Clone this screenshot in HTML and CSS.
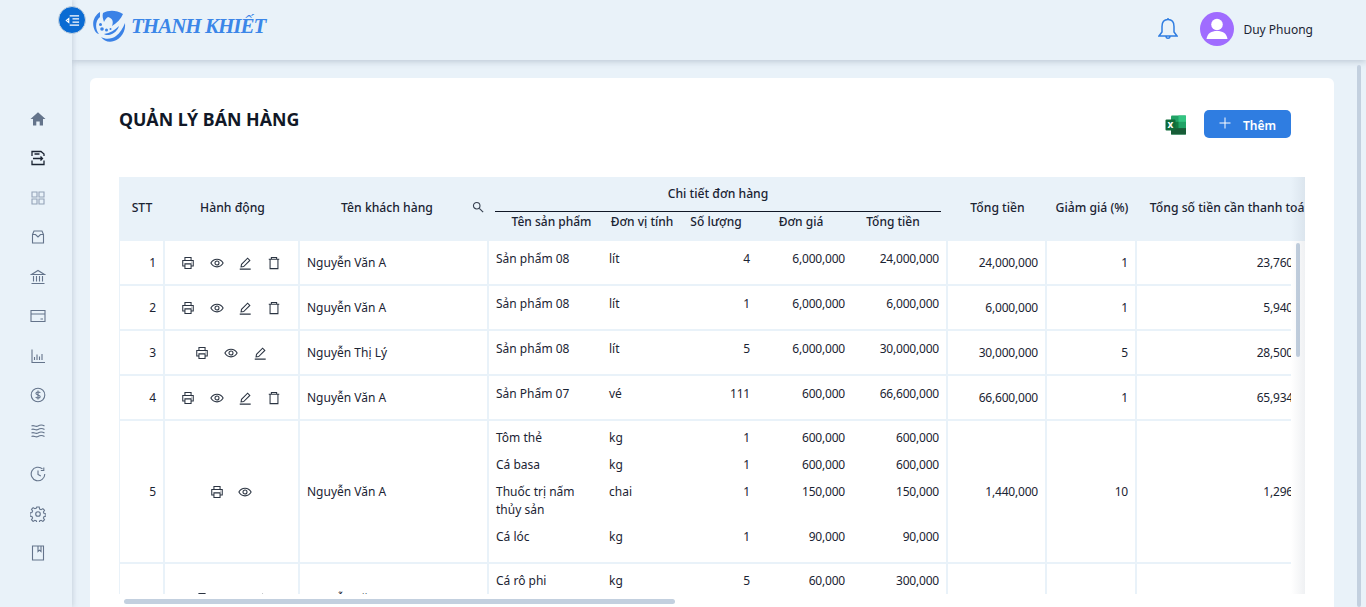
FILE: index.html
```html
<!DOCTYPE html>
<html lang="vi">
<head>
  <meta charset="UTF-8" />
  <meta name="viewport" content="width=device-width, initial-scale=1.0"/>
  <title>Quản lý bán hàng</title>
  <link rel="stylesheet" href="styles.css">
</head>
<body>
  <svg class="sprite" width="0" height="0">
    <symbol id="i-print" viewBox="0 0 16 16">
      <path d="M4.500 5V1.800h7V5M4.500 11.500H2V5.200h12v6.300h-2.500M4.500 9h7v5.200h-7z"/>
      <path d="M11.800 7h.4"/>
    </symbol>
    <symbol id="i-eye" viewBox="0 0 16 16">
      <path d="M1 8c1.600-3 4-4.400 7-4.400s5.400 1.400 7 4.400c-1.600 3-4 4.400-7 4.400S2.600 11 1 8z"/>
      <circle cx="8" cy="8" r="2.300"/>
    </symbol>
    <symbol id="i-edit" viewBox="0 0 16 16">
      <path d="M2 15h12.500M3.500 12.500l.5-3 7-7 2.500 2.500-7 7z"/>
    </symbol>
    <symbol id="i-trash" viewBox="0 0 16 16">
      <path d="M2 3.800h12M5 3.800V1.600h6v2.200M3.500 3.800v10.600h9V3.800"/>
    </symbol>
  </svg>

  <div class="app">
    <aside class="sidebar">
      <nav class="side-nav">
        <a class="side-item"><svg viewBox="0 0 16 16"><path class="solid" d="M8 1.200 15.500 8H13v6.500H9.700v-4H6.300v4H3V8H.5z"/></svg></a>
        <a class="side-item is-active"><svg viewBox="0 0 16 16"><path d="M2 6V1.500h9L14 4v2M2 10.500v4h12v-4M4.500 4h5M3 8.500h9.500M10.500 6.500l2 2-2 2"/></svg></a>
        <a class="side-item is-light"><svg viewBox="0 0 16 16"><path d="M2 2h5v5H2zM9 2h5v5H9zM2 9h5v5H2zM9 9h5v5H9z"/></svg></a>
        <a class="side-item"><svg viewBox="0 0 16 16"><path d="M2.500 5.500 4 2h8l1.500 3.500v8.500h-11zM2.500 5.500H5.500L8 8l2.500-2.500h3"/></svg></a>
        <a class="side-item"><svg viewBox="0 0 16 16"><path d="M1.500 5.500 8 1.500l6.500 4zM3.500 7v5.500M6.500 7v5.500M9.500 7v5.500M12.500 7v5.500M1.500 14.500h13"/></svg></a>
        <a class="side-item"><svg viewBox="0 0 16 16"><path d="M1 2.500h14v11H1zM1 6h14M10.500 11h2.500"/></svg></a>
        <a class="side-item"><svg viewBox="0 0 16 16"><path d="M2 1.500v13h13M4.500 12V9M7 12V6.500M9.500 12V8.500M12 12V6"/></svg></a>
        <a class="side-item"><svg viewBox="0 0 16 16"><circle cx="8" cy="8" r="6.800"/><path d="M10.300 5.800C9.800 4.800 6 4.500 5.900 6.400 5.800 8.400 10.300 7.500 10.200 9.600 10.100 11.500 6.300 11.300 5.700 10M8 3.500v9"/></svg></a>
        <a class="side-item side-item-tight"><svg viewBox="0 0 16 16"><path d="M1.500 3C4 1.500 5.500 4.500 8 3s4-1.500 6.500 0M1.500 6.500C4 5 5.500 8 8 6.500s4-1.500 6.500 0M1.500 10C4 8.500 5.500 11.500 8 10s4-1.500 6.500 0M1.500 13.500C4 12 5.500 15 8 13.500s4-1.500 6.500 0"/></svg></a>
        <a class="side-item side-item-gap"><svg viewBox="0 0 16 16"><path d="M14.800 8A6.800 6.800 0 1 1 12.500 2.900M8 4.500V8.500l2.800 1.500M13.800 1.500v3h-3"/></svg></a>
        <a class="side-item"><svg viewBox="0 0 16 16"><circle cx="8" cy="8" r="2.300"/><path d="M6.800 1h2.400l.4 2 1.500.7 1.800-1.100 1.600 1.700-1.100 1.700.7 1.500 1.900.4v2.200l-1.900.4-.7 1.500 1.100 1.700-1.600 1.700-1.800-1.100-1.500.7-.4 2H6.800l-.4-2-1.500-.7-1.800 1.100-1.600-1.700 1.100-1.700-.7-1.500-1.900-.4V6.900l1.900-.4.7-1.500-1.100-1.700 1.600-1.700 1.800 1.100 1.500-.7z"/></svg></a>
        <a class="side-item"><svg viewBox="0 0 16 16"><path d="M2.500 1h11v14h-11zM8 1v5.500l1.500-1.300L11 6.500V1"/></svg></a>
      </nav>
    </aside>

    <button class="menu-toggle">
      <svg viewBox="0 0 16 16" width="15" height="15"><path d="M5 3h10M8 6.300h7M8 9.700h7M5 13h10M1.500 8 4 6v4z"/></svg>
    </button>

    <div class="main">
      <header class="topbar">
        <div class="logo">
          <svg class="logo-mark" viewBox="0 0 34 34" width="34" height="34">
            <path class="logo-fill" d="M11 4C17 1 24 1 31 5 29 10 25 14 20 17 22 12 20 9 16 8 14 9 13 11 12 13 11 10 10 7 11 4z"/>
            <path class="logo-fill" d="M8 3C2 7-1 14 3 22 4 24 6 25 7 25 3 20 3 12 8 8z"/>
            <path class="logo-fill" d="M33 14C34 22 29 30 22 32 17 34 12 32 9 28 14 31 20 30 24 27 28 24 31 19 33 14z"/>
            <path class="logo-fill" d="M27 17C26 21 22 25 17 26 15 26 13 26 12 25 18 24 23 21 27 17z"/>
            <circle class="logo-fill" cx="8.500" cy="15.500" r="1.500"/>
            <circle class="logo-fill" cx="10" cy="20" r="1.800"/>
            <circle class="logo-fill" cx="14.500" cy="21" r="1.500"/>
            <circle class="logo-fill" cx="18.500" cy="20" r="1"/>
          </svg>
          <span class="logo-text">THANH KHIẾT</span>
        </div>
        <div class="topbar-right">
          <svg class="bell" viewBox="0 0 20 24" width="20" height="24"><path d="M10 2.500c-4 0-6 3-6 7v5.500l-3 4h18l-3-4V9.500c0-4-2-7-6-7zM10 1v1.500M8 19c0 3 4 3 4 0"/></svg>
          <div class="avatar">
            <svg viewBox="0 0 34 34" width="34" height="34"><circle cx="17" cy="12.500" r="5.800"/><path d="M6.500 27c1-6 5-8 10.500-8s9.500 2 10.500 8z"/></svg>
          </div>
          <span class="user-name">Duy Phuong</span>
        </div>
      </header>

      <main class="content">
        <section class="card">
          <div class="card-head">
            <h1 class="page-title">QUẢN LÝ BÁN HÀNG</h1>
            <div class="card-actions">
              <svg class="excel" viewBox="0 0 22 20" width="22" height="20">
                <rect x="6" y="0.500" width="15" height="19" rx="1" fill="#21a366"/>
                <rect x="13.500" y="0.500" width="7.500" height="6.300" fill="#33c481"/>
                <rect x="6" y="6.800" width="7.500" height="6.300" fill="#107c41"/>
                <rect x="6" y="13.100" width="15" height="6.400" fill="#185c37"/>
                <rect x="0.500" y="4.500" width="10" height="11" rx="1" fill="#0f6b3a"/>
                <text class="excel-x" x="5.500" y="13">x</text>
              </svg>
              <button class="btn-add">
                <svg viewBox="0 0 12 12" width="12" height="12"><path d="M6 .5v11M.5 6h11"/></svg>
                <span>Thêm</span>
              </button>
            </div>
          </div>

          <div class="table-wrap">
            <div class="table-head">
              <table class="grid-table">
                <colgroup>
                  <col class="c-stt"><col class="c-act"><col class="c-name"><col class="c-detail"><col class="c-total"><col class="c-disc"><col class="c-pay">
                </colgroup>
                <thead>
                  <tr>
                    <th>STT</th>
                    <th>Hành động</th>
                    <th>
                      <div class="th-search">
                        <span>Tên khách hàng</span>
                        <svg viewBox="0 0 14 14" width="12" height="12"><circle cx="5.500" cy="5.500" r="3.800"/><path d="M8.500 8.500l4.500 4.500"/></svg>
                      </div>
                    </th>
                    <th class="th-detail">
                      <div class="detail-title">Chi tiết đơn hàng</div>
                      <div class="detail-cols">
                        <span>Tên sản phẩm</span>
                        <span>Đơn vị tính</span>
                        <span>Số lượng</span>
                        <span>Đơn giá</span>
                        <span>Tổng tiền</span>
                      </div>
                    </th>
                    <th>Tổng tiền</th>
                    <th>Giảm giá (%)</th>
                    <th>Tổng số tiền cần thanh toán</th>
                  </tr>
                </thead>
              </table>
            </div>

            <div class="table-body">
              <table class="grid-table">
                <colgroup>
                  <col class="c-stt"><col class="c-act"><col class="c-name"><col class="c-detail"><col class="c-total"><col class="c-disc"><col class="c-pay">
                </colgroup>
                <tbody>
                  <tr>
                    <td class="num">1</td>
                    <td><div class="actions">
                      <svg class="ico"><use href="#i-print"/></svg><svg class="ico"><use href="#i-eye"/></svg><svg class="ico"><use href="#i-edit"/></svg><svg class="ico"><use href="#i-trash"/></svg>
                    </div></td>
                    <td>Nguyễn Văn A</td>
                    <td class="detail">
                      <div class="line"><span>Sản phẩm 08</span><span>lít</span><span class="r">4</span><span class="r">6,000,000</span><span class="r">24,000,000</span></div>
                    </td>
                    <td class="num">24,000,000</td>
                    <td class="num">1</td>
                    <td class="num">23,760,000</td>
                  </tr>
                  <tr>
                    <td class="num">2</td>
                    <td><div class="actions">
                      <svg class="ico"><use href="#i-print"/></svg><svg class="ico"><use href="#i-eye"/></svg><svg class="ico"><use href="#i-edit"/></svg><svg class="ico"><use href="#i-trash"/></svg>
                    </div></td>
                    <td>Nguyễn Văn A</td>
                    <td class="detail">
                      <div class="line"><span>Sản phẩm 08</span><span>lít</span><span class="r">1</span><span class="r">6,000,000</span><span class="r">6,000,000</span></div>
                    </td>
                    <td class="num">6,000,000</td>
                    <td class="num">1</td>
                    <td class="num">5,940,000</td>
                  </tr>
                  <tr>
                    <td class="num">3</td>
                    <td><div class="actions">
                      <svg class="ico"><use href="#i-print"/></svg><svg class="ico"><use href="#i-eye"/></svg><svg class="ico"><use href="#i-edit"/></svg>
                    </div></td>
                    <td>Nguyễn Thị Lý</td>
                    <td class="detail">
                      <div class="line"><span>Sản phẩm 08</span><span>lít</span><span class="r">5</span><span class="r">6,000,000</span><span class="r">30,000,000</span></div>
                    </td>
                    <td class="num">30,000,000</td>
                    <td class="num">5</td>
                    <td class="num">28,500,000</td>
                  </tr>
                  <tr>
                    <td class="num">4</td>
                    <td><div class="actions">
                      <svg class="ico"><use href="#i-print"/></svg><svg class="ico"><use href="#i-eye"/></svg><svg class="ico"><use href="#i-edit"/></svg><svg class="ico"><use href="#i-trash"/></svg>
                    </div></td>
                    <td>Nguyễn Văn A</td>
                    <td class="detail">
                      <div class="line"><span>Sản Phẩm 07</span><span>vé</span><span class="r">111</span><span class="r">600,000</span><span class="r">66,600,000</span></div>
                    </td>
                    <td class="num">66,600,000</td>
                    <td class="num">1</td>
                    <td class="num">65,934,000</td>
                  </tr>
                  <tr>
                    <td class="num">5</td>
                    <td><div class="actions">
                      <svg class="ico"><use href="#i-print"/></svg><svg class="ico"><use href="#i-eye"/></svg>
                    </div></td>
                    <td>Nguyễn Văn A</td>
                    <td class="detail">
                      <div class="line"><span>Tôm thẻ</span><span>kg</span><span class="r">1</span><span class="r">600,000</span><span class="r">600,000</span></div>
                      <div class="line"><span>Cá basa</span><span>kg</span><span class="r">1</span><span class="r">600,000</span><span class="r">600,000</span></div>
                      <div class="line"><span>Thuốc trị nấm<br>thủy sản</span><span>chai</span><span class="r">1</span><span class="r">150,000</span><span class="r">150,000</span></div>
                      <div class="line"><span>Cá lóc</span><span>kg</span><span class="r">1</span><span class="r">90,000</span><span class="r">90,000</span></div>
                    </td>
                    <td class="num">1,440,000</td>
                    <td class="num">10</td>
                    <td class="num">1,296,000</td>
                  </tr>
                  <tr>
                    <td class="num">6</td>
                    <td><div class="actions">
                      <svg class="ico"><use href="#i-print"/></svg><svg class="ico"><use href="#i-eye"/></svg><svg class="ico"><use href="#i-edit"/></svg>
                    </div></td>
                    <td>Nguyễn Văn A</td>
                    <td class="detail">
                      <div class="line"><span>Cá rô phi</span><span>kg</span><span class="r">5</span><span class="r">60,000</span><span class="r">300,000</span></div>
                      <div class="line"><span>Cá lóc</span><span>kg</span><span class="r">1</span><span class="r">90,000</span><span class="r">90,000</span></div>
                    </td>
                    <td class="num">390,000</td>
                    <td class="num">1</td>
                    <td class="num">386,100</td>
                  </tr>
                </tbody>
              </table>
            </div>

            <div class="scroll-y"></div>
            <div class="edge-shadow"></div>
          </div>
          <div class="scroll-x"></div>
        </section>
      </main>
    </div>

    <div class="page-scroll"></div>
  </div>
</body>
</html>
```

FILE: styles.css
```css
* {
  box-sizing: border-box;
}

html, body {
  height: 100%;
}

body {
  margin: 0;
  font-family: "Noto Sans", "Open Sans", sans-serif;
  font-size: 12px;
  color: #1b2433;
  background-color: #e9f2f9;
  overflow: hidden;
}

.sprite {
  position: absolute;
}

.app {
  display: flex;
  height: 607px;
  position: relative;
}

/* sidebar */
.sidebar {
  width: 72px;
  flex-shrink: 0;
  background-color: #e9f2f9;
  box-shadow: 1px 0 5px rgba(100, 116, 139, 0.25);
  padding-top: 99px;
  z-index: 1;
}

.side-nav {
  display: flex;
  flex-direction: column;
}

.side-item {
  height: 39.5px;
  padding-left: 30px;
  display: flex;
  align-items: center;
}

.side-item svg {
  width: 16px;
  height: 16px;
  fill: none;
  stroke: #64748b;
  stroke-width: 1.1;
}

.side-item .solid {
  fill: #64748b;
  stroke: none;
}

.side-item.is-active svg {
  stroke: #1b2433;
  stroke-width: 1.3;
}

.side-item.is-light svg {
  stroke: #94a3b8;
}

.side-item-tight {
  margin-top: -3.5px;
}

.side-item-gap {
  margin-top: 3.5px;
}

.menu-toggle {
  position: absolute;
  left: 58px;
  top: 6px;
  width: 28px;
  height: 28px;
  padding: 0;
  border-radius: 50%;
  border: 1px solid #c5d3e0;
  background-color: #0a6bd3;
  display: flex;
  align-items: center;
  justify-content: center;
  z-index: 3;
}

.menu-toggle svg {
  fill: none;
  stroke: #fff;
  stroke-width: 1.3;
}

/* topbar */
.main {
  flex: 1;
  min-width: 0;
  display: flex;
  flex-direction: column;
}

.topbar {
  height: 60px;
  flex-shrink: 0;
  display: flex;
  align-items: flex-start;
  justify-content: space-between;
  padding: 9px 53px 0 20px;
  background-color: #e9f2f9;
  box-shadow: 0 2px 6px rgba(100, 116, 139, 0.3);
}

.logo {
  display: flex;
  align-items: center;
  gap: 5px;
}

.logo-fill {
  fill: #3b82e6;
}

.logo-text {
  font-family: "Liberation Serif", serif;
  font-style: italic;
  font-weight: bold;
  font-size: 21px;
  letter-spacing: -1px;
  color: #3b86e8;
}

.topbar-right {
  display: flex;
  align-items: center;
  height: 40px;
}

.bell {
  fill: none;
  stroke: #2f7de1;
  stroke-width: 1.5;
  margin-right: 22px;
}

.avatar {
  width: 34px;
  height: 34px;
  border-radius: 50%;
  background-color: #a06cff;
  margin-right: 9px;
}

.avatar svg {
  display: block;
  fill: #fff;
}

/* card */
.content {
  flex: 1;
  min-height: 0;
  padding: 18px 32px 0 18px;
}

.card {
  height: 100%;
  background-color: #fff;
  border-radius: 6px 6px 0 0;
  padding: 29px 29px 0;
}

.card-head {
  display: flex;
  justify-content: space-between;
  height: 70px;
}

.page-title {
  margin: 0;
  font-size: 17.8px;
  line-height: 24px;
  font-weight: 700;
  color: #111827;
}

.card-actions {
  display: flex;
  align-items: flex-start;
  padding: 3px 14px 0 0;
}

.excel {
  margin: 5px 17px 0 0;
}

.excel-x {
  font-size: 10px;
  font-weight: bold;
  fill: #fff;
  text-anchor: middle;
}

.btn-add {
  width: 87px;
  height: 28px;
  padding: 0 0 0 15px;
  border: none;
  border-radius: 5px;
  background-color: #2f7de1;
  color: #fff;
  font-family: inherit;
  font-size: 12px;
  font-weight: 600;
  display: flex;
  align-items: center;
  gap: 12px;
}

.btn-add svg {
  stroke: #fff;
  stroke-width: 1;
  margin-top: -3px;
}

.btn-add span {
  padding-top: 2px;
}

/* table */
.table-wrap {
  position: relative;
  height: 417px;
  overflow: hidden;
}

.grid-table {
  width: 1206px;
  table-layout: fixed;
  border-collapse: separate;
  border-spacing: 0;
}

.c-stt { width: 46px; }
.c-act { width: 135px; }
.c-name { width: 189px; }
.c-detail { width: 459px; }
.c-total { width: 99px; }
.c-disc { width: 90px; }
.c-pay { width: 188px; }

.table-head {
  overflow: hidden;
}

.table-head th {
  height: 64px;
  padding: 0 7px 4px;
  background-color: #e9f2f9;
  font-size: 12.2px;
  font-weight: 500;
  text-align: center;
  white-space: nowrap;
}

.th-search {
  display: flex;
  align-items: center;
}

.th-search span {
  flex: 1;
  padding-right: 5px;
}

.th-search svg {
  fill: none;
  stroke: #374151;
  stroke-width: 1.3;
  margin-right: -2px;
}

.table-head .th-detail {
  padding: 0 7px 0 6px;
  vertical-align: top;
}

.detail-title {
  height: 35px;
  line-height: 33px;
  border-bottom: 1px solid #111827;
}

.detail-cols {
  display: grid;
  grid-template-columns: 113px 68px 80px 90px 94px;
  font-size: 12px;
  line-height: 20px;
}

.table-body {
  width: 1172px;
  overflow: hidden;
}

.table-body td {
  padding: 0 7px;
  border-right: 2px solid #e9f2f9;
  border-bottom: 2px solid #e9f2f9;
  font-size: 12px;
  line-height: 18px;
  vertical-align: middle;
}

.table-body td:first-child {
  border-left: 1px solid #e9f2f9;
}

.table-body .num {
  text-align: right;
  letter-spacing: -0.2px;
}

.table-body .detail {
  padding: 8px 0 16px 7px;
  vertical-align: top;
}

.line {
  display: grid;
  grid-template-columns: 113px 68px 73px 95px 94px;
}

.line:only-child {
  margin-top: 1px;
}

.line + .line {
  margin-top: 9px;
}

.line .r {
  text-align: right;
  letter-spacing: -0.2px;
}

.actions {
  display: flex;
  justify-content: center;
  gap: 14.7px;
  padding-right: 1px;
}

.ico {
  width: 14px;
  height: 14px;
  fill: none;
  stroke: #2b3442;
  stroke-width: 1.2;
}

/* scrollbars are drawn over the table */
.scroll-y {
  position: absolute;
  left: 1177px;
  top: 66px;
  width: 4px;
  height: 114px;
  border-radius: 2px;
  background-color: #c3d0df;
}

.edge-shadow {
  position: absolute;
  right: 0;
  top: 0;
  bottom: 0;
  width: 14px;
  background: linear-gradient(to right, rgba(100, 116, 139, 0), rgba(100, 116, 139, 0.1));
}

.scroll-x {
  width: 551px;
  height: 5px;
  margin: 5px 0 0 5px;
  border-radius: 3px;
  background-color: #c3d0df;
}

.page-scroll {
  position: absolute;
  left: 1357px;
  top: 65px;
  width: 4px;
  height: 542px;
  background-color: #c3d0df;
  border-radius: 2px;
}
```
